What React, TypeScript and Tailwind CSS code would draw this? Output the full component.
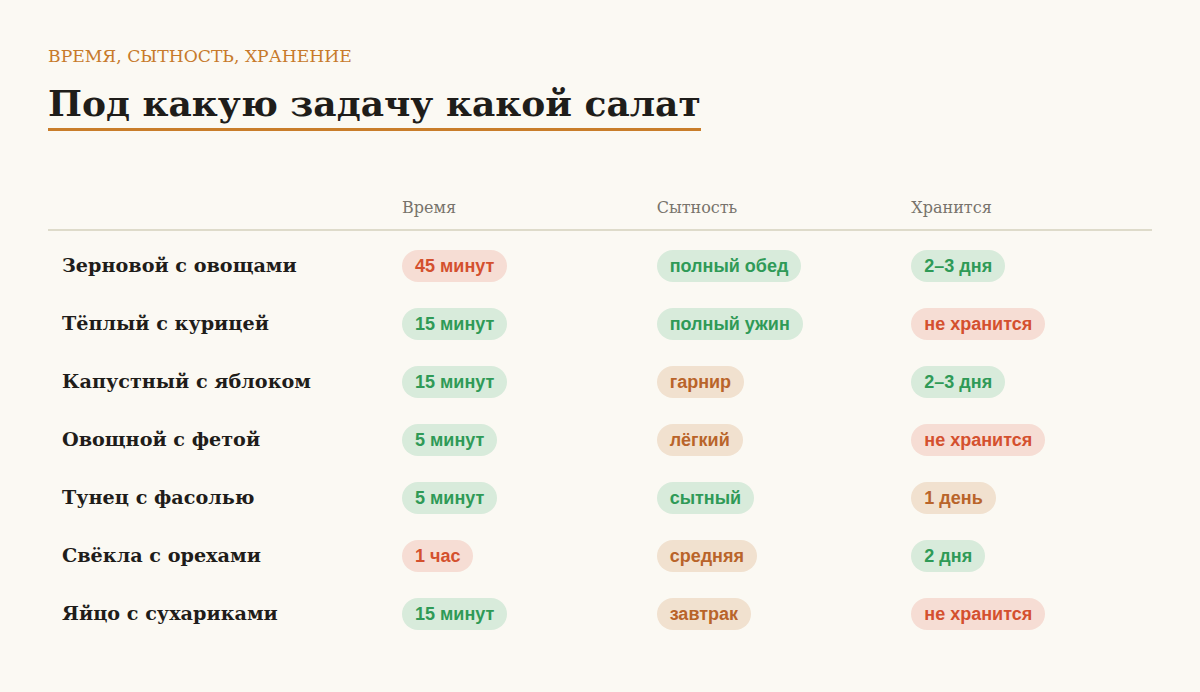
type Tone = "red" | "green" | "amber";

const tones: Record<Tone, string> = {
  red: "bg-[#f6ddd4] text-[#d4502e]",
  green: "bg-[#d8ebdb] text-[#2f9a57]",
  amber: "bg-[#f1e1cf] text-[#b9642a]",
};

const rows: { name: string; cells: [string, Tone][] }[] = [
  { name: "Зерновой с овощами", cells: [["45 минут", "red"], ["полный обед", "green"], ["2–3 дня", "green"]] },
  { name: "Тёплый с курицей", cells: [["15 минут", "green"], ["полный ужин", "green"], ["не хранится", "red"]] },
  { name: "Капустный с яблоком", cells: [["15 минут", "green"], ["гарнир", "amber"], ["2–3 дня", "green"]] },
  { name: "Овощной с фетой", cells: [["5 минут", "green"], ["лёгкий", "amber"], ["не хранится", "red"]] },
  { name: "Тунец с фасолью", cells: [["5 минут", "green"], ["сытный", "green"], ["1 день", "amber"]] },
  { name: "Свёкла с орехами", cells: [["1 час", "red"], ["средняя", "amber"], ["2 дня", "green"]] },
  { name: "Яйцо с сухариками", cells: [["15 минут", "green"], ["завтрак", "amber"], ["не хранится", "red"]] },
];

function Pill({ label, tone }: { label: string; tone: Tone }) {
  return (
    <span
      className={`inline-flex h-8 items-center rounded-full px-[13px] text-[18px] font-bold ${tones[tone]}`}
      style={{ fontFamily: '"Liberation Sans", Arial, sans-serif' }}
    >
      {label}
    </span>
  );
}

export default function App() {
  return (
    <div
      className="min-h-[692px] w-full bg-[#fbf9f3] px-12 pt-[45px] text-[#1f1d1a]"
      style={{ fontFamily: '"DejaVu Serif", "Liberation Serif", serif' }}
    >
      <div className="text-[17.2px] uppercase leading-[22px] text-[#c77a2b]">
        Время, сытность, хранение
      </div>
      <h1 className="mt-[14px] inline-block border-b-[3px] border-[#c97d2a] pb-[3px] text-[36px] font-bold leading-[44px]">
        Под какую задачу какой салат
      </h1>

      <div className="mt-[65px] grid grid-cols-[340px_1fr_1fr_1fr] border-b-2 border-[#dedbca] pb-[9px] text-[16px] text-[#77736b]">
        <div />
        <div className="px-[14px]">Время</div>
        <div className="px-[14px]">Сытность</div>
        <div className="px-[14px]">Хранится</div>
      </div>

      <div className="pt-[6px]">
        {rows.map((r) => (
          <div key={r.name} className="grid h-[58px] grid-cols-[340px_1fr_1fr_1fr] items-center">
            <div className="px-[14px] text-[19.2px] font-bold text-[#1f1d1a]">{r.name}</div>
            {r.cells.map(([label, tone], i) => (
              <div key={i} className="px-[14px]">
                <Pill label={label} tone={tone} />
              </div>
            ))}
          </div>
        ))}
      </div>
    </div>
  );
}
